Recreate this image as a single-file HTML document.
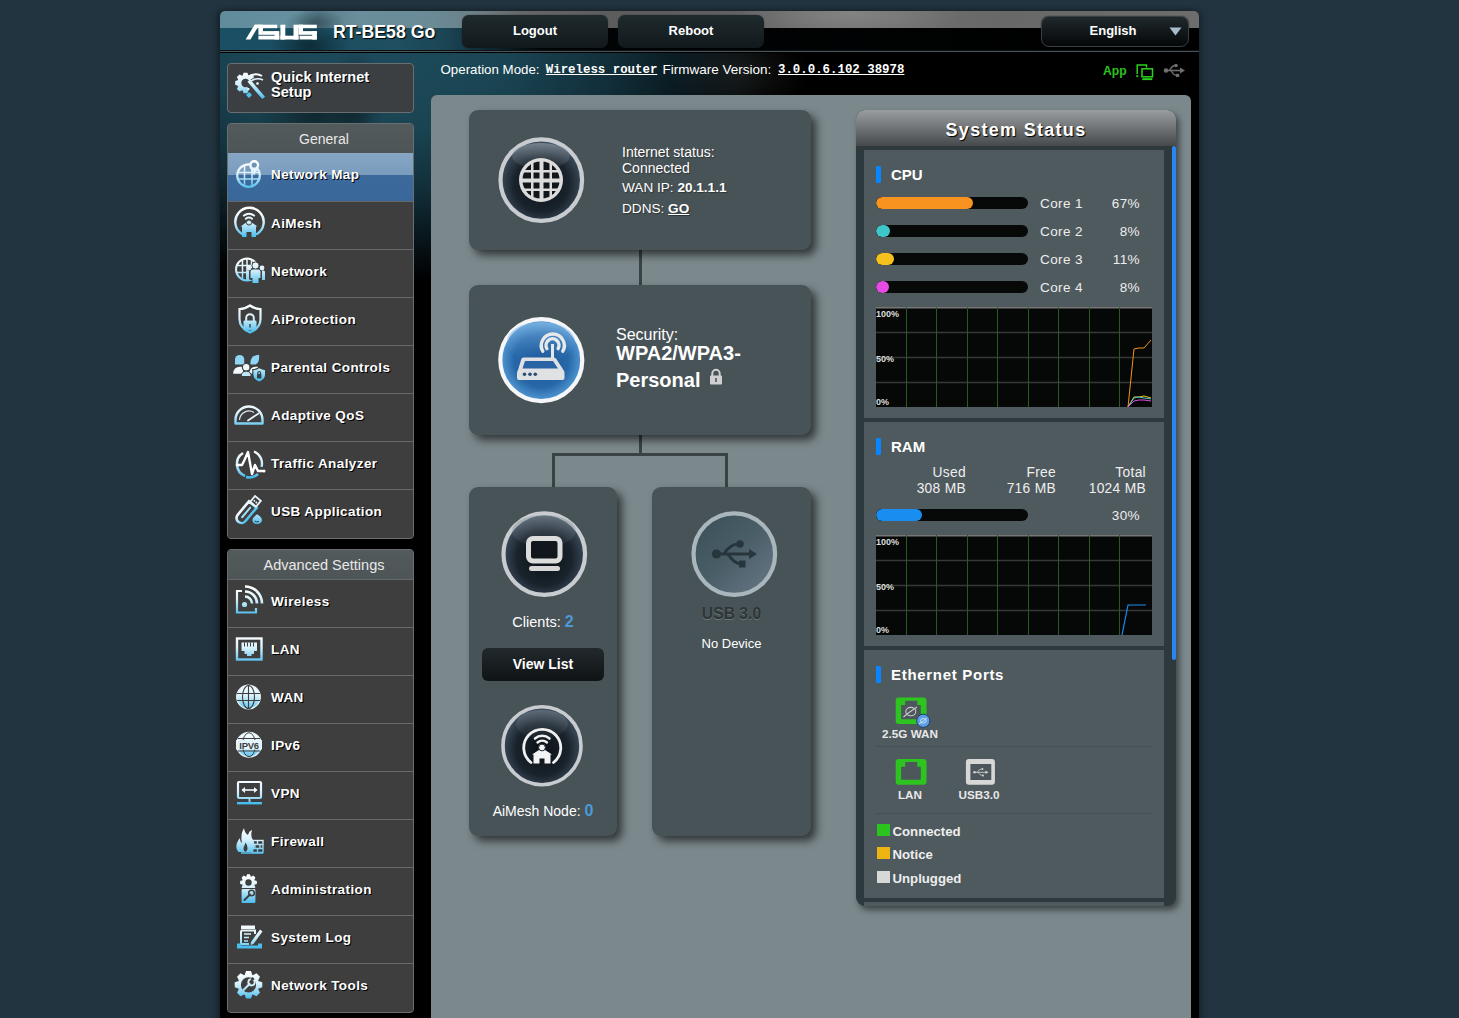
<!DOCTYPE html>
<html><head><meta charset="utf-8">
<style>
*{box-sizing:border-box}
html,body{margin:0;padding:0;width:1459px;height:1018px;overflow:hidden;background:#223440;font-family:"Liberation Sans",sans-serif;color:#fff}
.a{position:absolute}
#frame{position:absolute;left:220px;top:11px;width:979px;height:1020px;border-radius:5px 5px 0 0;overflow:hidden;background:#000;box-shadow:-3px 0 6px rgba(0,0,0,.35),3px 0 6px rgba(0,0,0,.25)}
#hdrTop{position:absolute;left:0;top:0;width:979px;height:17px;background:
 radial-gradient(ellipse 30px 14px at 95px 12px,rgba(30,50,60,.55),rgba(30,50,60,0)),
 radial-gradient(ellipse 110px 30px at 630px 2px,rgba(150,150,150,.55),rgba(150,150,150,0)),
 linear-gradient(90deg,#5f8b9b 0%,#66909f 8%,#587c8a 10%,#6a8e9b 14%,#6a8a96 22%,#6d7f86 26%,#666 31%,#5c5c5c 40%,#5e5e5e 50%,#6c6c6c 60%,#6e6e6e 70%,#686868 80%,#6d6d6d 100%)}
#hdrBot{position:absolute;left:0;top:17px;width:979px;height:22px;background:
 radial-gradient(ellipse 40px 22px at 90px 18px,rgba(5,20,28,.6),rgba(5,20,28,0)),
 linear-gradient(90deg,#1a5064 0%,#1b4e61 10%,#1f4f60 18%,#1b4555 23%,#0e2630 28%,#020405 33%,#000 100%)}
#hdrLine{position:absolute;left:0;top:39px;width:979px;height:3px;background:linear-gradient(#0a1216 0,#0a1216 1px,#4a5459 1px,#4a5459 2px,rgba(0,0,0,0) 2px)}
#below{position:absolute;left:0;top:42px;width:979px;height:1000px;background:
 radial-gradient(ellipse 60px 50px at 95px 60px,rgba(0,0,0,.45),rgba(0,0,0,0)),
 radial-gradient(ellipse 28px 60px at 135px 50px,rgba(0,0,0,.35),rgba(0,0,0,0)),
 radial-gradient(ellipse 70px 45px at 520px 20px,rgba(70,70,70,.30),rgba(0,0,0,0)),
 radial-gradient(ellipse 400px 230px at 150px 0px,#1d4b5c 0%,#1a4452 35%,#112d38 62%,rgba(0,0,0,0) 100%),
 #000}
.btn{position:absolute;height:33px;border-radius:7px;background:linear-gradient(#1f2a2e,#12191c);box-shadow:0 0 1px #000;font-weight:bold;font-size:13px;text-align:center;line-height:31px;color:#fff}
.sbox{position:absolute;left:227px;width:187px;background:#3e3e3e;border:1px solid #6a6e70;border-radius:4px;overflow:hidden}
.shead{height:29px;line-height:30px;text-align:center;padding-left:7px;font-size:14px;color:#e8e8e8;background:linear-gradient(#535a5c,#4e5557)}
.row{position:relative;height:48px;border-top:1px solid #66696b;background:#3e3e3e}
.row .t{position:absolute;left:43px;top:1px;line-height:42px;font-weight:bold;font-size:13.5px;letter-spacing:.4px;color:#fff;text-shadow:1px 1px 0 #000;white-space:nowrap}
.row svg{position:absolute;left:4px;top:8px}
.mono{font-family:"Liberation Mono",monospace;font-weight:bold;text-decoration:underline;font-size:12.4px}
.nbox{position:absolute;background:#485357;border-radius:9px;box-shadow:5px 5px 8px rgba(0,0,0,.6)}
.sec{position:absolute;left:8px;width:300px;background:#4f5a5e}
.bl{position:absolute;left:876px;width:5px;height:17px;background:#0a84ff;border-radius:1px}
.bar{position:absolute;left:876px;width:152px;height:12px;border-radius:6px;background:#070909;overflow:hidden}
.bar i{display:block;height:12px;border-radius:6px}
.ct{left:1040px;font-size:13.5px;letter-spacing:.4px;color:#eee;white-space:nowrap}
.cp{left:1090px;width:50px;text-align:right;font-size:13.5px;letter-spacing:.4px;color:#eee;white-space:nowrap}
.ram{width:76px;text-align:right;font-size:13.8px;line-height:16px;letter-spacing:.3px;color:#eee;white-space:nowrap}
.pl{text-align:center;font-size:11.7px;font-weight:bold;color:#e8e8e8;white-space:nowrap}
.lg{left:892.5px;font-size:13.2px;font-weight:bold;color:#eee;white-space:nowrap}
</style></head><body>
<div id="frame">
  <div id="hdrTop"></div><div id="hdrBot"></div><div id="hdrLine"></div>
  <div id="below"></div>
</div>

<!-- header -->
<svg class="a" style="left:242px;top:20px" width="80" height="24" viewBox="0 0 80 24"><g fill="#fff">
<path d="M3.6 19.5 L12.6 4.7 H17.4 L8.4 19.5 Z"/>
<rect x="12.6" y="4.7" width="22.6" height="3.5"/>
<rect x="16.4" y="4.7" width="4.5" height="10.1"/>
<rect x="20.9" y="11.1" width="14.3" height="3.7"/>
<rect x="32.6" y="11.1" width="4.7" height="8.4"/>
<rect x="16.4" y="15.7" width="20.9" height="3.8"/>
<rect x="38.4" y="4.7" width="4.9" height="14.8"/>
<rect x="51.5" y="4.7" width="5" height="14.8"/>
<rect x="38.4" y="15.7" width="18.1" height="3.8"/>
<rect x="56.5" y="4.7" width="18.3" height="3.5"/>
<rect x="56.5" y="4.7" width="4.5" height="10.1"/>
<rect x="61" y="11.1" width="13.8" height="3.7"/>
<rect x="70.2" y="11.1" width="4.6" height="8.4"/>
<rect x="57.5" y="15.7" width="17.3" height="3.8"/>
</g></svg>
<div class="a" style="left:333px;top:22px;font-weight:bold;font-size:17.7px;text-shadow:1px 1px 1px #000;white-space:nowrap">RT-BE58 Go</div>
<div class="btn" style="left:462px;top:15px;width:146px">Logout</div>
<div class="btn" style="left:618px;top:15px;width:146px">Reboot</div>
<div class="btn" style="left:1041px;top:16px;width:148px;height:31px;border:1px solid #394044;border-radius:8px;background:linear-gradient(#1f292d,#050708);line-height:27px;padding-right:4px">English</div>
<svg class="a" style="left:1168px;top:26px" width="15" height="11" viewBox="0 0 15 11"><path d="M1.5 1.5 H13.5 L7.5 9.5 Z" fill="#a9bccb"/></svg>
<svg class="a" style="left:1134px;top:62px" width="22" height="20" viewBox="0 0 22 20"><g fill="none" stroke="#2bd11e" stroke-width="1.5">
<path d="M3.2 12 V3 H12.5 V5.5"/><rect x="8" y="6.8" width="10.5" height="8"/></g><rect x="8.3" y="16.2" width="10" height="1.9" fill="#2bd11e"/><rect x="2.3" y="13.2" width="1.9" height="1.9" fill="#2bd11e"/></svg>
<svg class="a" style="left:1162px;top:62px" width="24" height="17" viewBox="0 0 24 17"><g fill="#6f6f6f" stroke="#6f6f6f">
<circle cx="4" cy="8.5" r="2.3" stroke="none"/><path d="M4 8.5 H19" stroke-width="1.6"/><path d="M18 5.5 L23 8.5 L18 11.5 Z" stroke="none"/>
<path d="M7.5 8.5 Q10 3.5 13.5 3.5" fill="none" stroke-width="1.4"/><circle cx="14" cy="3.5" r="1.8" stroke="none"/>
<path d="M9 8.5 Q11.5 13.5 15 13.5" fill="none" stroke-width="1.4"/><rect x="14" y="11.8" width="3.2" height="3.2" stroke="none"/></g></svg>

<div class="a" style="left:440.5px;top:62px;font-size:13.3px;color:#fff;white-space:nowrap">Operation Mode:</div>
<div class="a mono" style="left:545.8px;top:62px;color:#fff;white-space:nowrap;line-height:16px">Wireless router</div>
<div class="a" style="left:662.5px;top:62px;font-size:13.5px;color:#fff;white-space:nowrap">Firmware Version:</div>
<div class="a mono" style="left:778px;top:62px;color:#fff;white-space:nowrap;line-height:16px">3.0.0.6.102_38978</div>
<div class="a" style="left:1103px;top:64px;font-size:12.2px;font-weight:bold;color:#2ac31e">App</div>

<!-- sidebar -->
<div class="sbox" style="top:63px;height:50px;background:#3b3f42">
  <div class="a" style="left:43px;top:6px;font-weight:bold;font-size:14.6px;line-height:15px;text-shadow:1px 1px 0 #000">Quick Internet<br>Setup</div>
</div>

<div class="sbox" style="top:123px;height:416px">
  <div class="shead">General</div>
  <div class="row" style="background:linear-gradient(#86a6c4 0%,#7a9cbd 45%,#3d6a9c 46%,#3a679a 100%);border-top:none;height:48px"><div class="t">Network Map</div></div>
  <div class="row"><div class="t">AiMesh</div></div>
  <div class="row"><div class="t">Network</div></div>
  <div class="row"><div class="t">AiProtection</div></div>
  <div class="row"><div class="t">Parental Controls</div></div>
  <div class="row"><div class="t">Adaptive QoS</div></div>
  <div class="row"><div class="t">Traffic Analyzer</div></div>
  <div class="row"><div class="t">USB Application</div></div>
</div>

<div class="sbox" style="top:549px;height:464px">
  <div class="shead" style="font-size:14.5px">Advanced Settings</div>
  <div class="row"><div class="t">Wireless</div></div>
  <div class="row"><div class="t">LAN</div></div>
  <div class="row"><div class="t">WAN</div></div>
  <div class="row"><div class="t">IPv6</div></div>
  <div class="row"><div class="t">VPN</div></div>
  <div class="row"><div class="t">Firewall</div></div>
  <div class="row"><div class="t">Administration</div></div>
  <div class="row"><div class="t">System Log</div></div>
  <div class="row"><div class="t">Network Tools</div></div>
</div>

<!-- sidebar icons -->
<!--ICONS-->
<svg width="0" height="0" style="position:absolute"><defs>
<linearGradient id="ig" gradientUnits="userSpaceOnUse" x1="0" y1="8" x2="0" y2="37"><stop offset="0" stop-color="#ffffff"/><stop offset=".45" stop-color="#d6f0fb"/><stop offset="1" stop-color="#3fb8ec"/></linearGradient>
<linearGradient id="ig2" gradientUnits="userSpaceOnUse" x1="0" y1="-6" x2="0" y2="6"><stop offset="0" stop-color="#ffffff"/><stop offset="1" stop-color="#45bdee"/></linearGradient>
</defs></svg>
<svg class="a" style="left:228px;top:63px" width="44" height="50" viewBox="0 0 44 50">
<path d="M24.95 17.08 L27.84 18.15 L27.84 21.85 L24.95 22.92 L24.83 23.21 L26.11 26.00 L23.50 28.61 L20.71 27.33 L20.42 27.45 L19.35 30.34 L15.65 30.34 L14.58 27.45 L14.29 27.33 L11.50 28.61 L8.89 26.00 L10.17 23.21 L10.05 22.92 L7.16 21.85 L7.16 18.15 L10.05 17.08 L10.17 16.79 L8.89 14.00 L11.50 11.39 L14.29 12.67 L14.58 12.55 L15.65 9.66 L19.35 9.66 L20.42 12.55 L20.71 12.67 L23.50 11.39 L26.11 14.00 L24.83 16.79 Z" fill="url(#ig)"/>
<circle cx="17.5" cy="20" r="4.2" fill="#3b3f42"/>
<path d="M17.5 20 L30 12 L36 22 L24 34 Z" fill="#3b3f42"/>
<path d="M19 14 Q28 9 34 13" fill="none" stroke="url(#ig)" stroke-width="2"/>
<path d="M22 19 L34.5 33.5" stroke="url(#ig)" stroke-width="3.6" stroke-linecap="square"/>
<path d="M23 18 Q29 14 35 17" fill="none" stroke="url(#ig)" stroke-width="1.5"/>
<circle cx="29.5" cy="20.5" r="1.3" fill="#fff"/><circle cx="20.5" cy="26" r="1.1" fill="#fff"/>
<path d="M21 29 L24 32 L21 35 L18 32 Z" fill="#4cc0ee"/>
</svg>
<svg class="a" style="left:228px;top:153px" width="44" height="48" viewBox="0 0 44 48">
<circle cx="20.5" cy="22.6" r="11.3" fill="none" stroke="url(#ig)" stroke-width="2.2"/>
<g stroke="url(#ig)" stroke-width="1.6" fill="none"><path d="M9.5 19.5H31M9.5 26H31M16.5 12V33.5M24 12V33.5"/></g>
<path d="M26.2 7 a5 5 0 0 1 5 5 c0 3 -3 6 -5 10.5 c-2 -4.5 -5 -7.5 -5 -10.5 a5 5 0 0 1 5 -5z" fill="url(#ig)"/>
<circle cx="26.2" cy="12" r="2.6" fill="#6f92b6"/>
</svg>
<svg class="a" style="left:228px;top:201px" width="44" height="48" viewBox="0 0 44 48">
<path d="M14 33 A14.2 14.2 0 1 1 29 33" fill="none" stroke="url(#ig)" stroke-width="2.4" stroke-linecap="round"/>
<path d="M16 14.5 A8 8 0 0 1 26 14.5" fill="none" stroke="url(#ig)" stroke-width="2.2" stroke-linecap="round"/>
<path d="M17.8 17.8 A5 5 0 0 1 24 17.8" fill="none" stroke="url(#ig)" stroke-width="2" stroke-linecap="round"/>
<path d="M21 19.5 L29.5 25.5 L28 25.5 V36 H23.5 V31 H18.5 V36 H14 V25.5 L12.5 25.5 Z" fill="url(#ig)"/>
<circle cx="21" cy="21.5" r="2.6" fill="url(#ig)" stroke="#3e3e3e" stroke-width="1"/>
</svg>
<svg class="a" style="left:228px;top:249px" width="44" height="48" viewBox="0 0 44 48">
<circle cx="19" cy="20.5" r="11" fill="none" stroke="url(#ig)" stroke-width="2"/>
<g stroke="url(#ig)" stroke-width="1.5" fill="none"><path d="M8.5 16.5H29.5M8.5 23.5H29.5M14.5 10V31M19 9.5V31.5M23.5 10V31"/></g>
<path d="M21 22 Q21 19 24 19 H31 Q34 19 34 22 V29 Q33 31 31 31 V34 H24 V31 Q21 31 21 29Z" fill="#3e3e3e"/>
<circle cx="27.5" cy="16.5" r="3.6" fill="url(#ig)" stroke="#3e3e3e" stroke-width="1"/>
<path d="M22.5 23 Q22.5 20.5 25 20.5 H30 Q32.5 20.5 32.5 23 V29 H30.5 V34 H24.5 V29 H22.5Z" fill="url(#ig)"/>
<circle cx="21" cy="19" r="2.4" fill="url(#ig)"/><path d="M18 23 Q18 21.5 19.5 21.5 H21 V31 H18Z" fill="url(#ig)"/>
<circle cx="34" cy="19" r="2.4" fill="url(#ig)"/><path d="M34 21.5 H35.5 Q37 21.5 37 23 V31 H34Z" fill="url(#ig)"/>
</svg>
<svg class="a" style="left:228px;top:297px" width="44" height="48" viewBox="0 0 44 48">
<path d="M22 8.5 Q17 12 11.5 12 V22 Q11.5 31 22 35.5 Q32.5 31 32.5 22 V12 Q27 12 22 8.5Z" fill="none" stroke="url(#ig)" stroke-width="2.2"/>
<path d="M18.2 24 V21 A3.8 3.8 0 0 1 25.8 21 V24" fill="none" stroke="url(#ig)" stroke-width="2"/>
<rect x="15.5" y="23.5" width="13" height="10" rx="1" fill="url(#ig)"/>
<rect x="21.3" y="27" width="1.4" height="3.5" fill="#3e3e3e"/>
</svg>
<svg class="a" style="left:228px;top:345px" width="44" height="48" viewBox="0 0 44 48">
<path d="M7 19.5 V14.5 A4.6 4.6 0 0 1 16.2 14.5 V19.5 Z" fill="#8fd6f6"/>
<path d="M22.5 19.5 Q21.5 10.5 31 9.8 Q31.8 18 27.5 19.5 Z" fill="#8fd6f6"/>
<path d="M5.2 28.7 Q5.5 21.8 12 21.8 H15 V28.7 Z" fill="#f2f9fd"/>
<path d="M21.5 28.5 Q21.5 21.8 27.5 21.8 H30 V28.5 Z" fill="#f2f9fd"/>
<circle cx="18.2" cy="22.3" r="3.8" fill="#eef8fd" stroke="#3e3e3e" stroke-width="1.2"/>
<path d="M13.2 31.5 Q13.2 26.2 18.2 26.2 Q23.2 26.2 23.2 31.5Z" fill="#bfe6f8" stroke="#3e3e3e" stroke-width="1"/>
<path d="M31.2 22.6 Q34.2 24.6 37.6 24.6 V30 Q37.6 34.5 31.2 37.2 Q24.8 34.5 24.8 30 V24.6 Q28.2 24.6 31.2 22.6Z" fill="url(#ig)" stroke="#3e3e3e" stroke-width="1.2"/>
<rect x="29" y="29" width="4.4" height="4.4" rx=".5" fill="#34424a"/><path d="M29.9 29 V27.8 A1.3 1.3 0 0 1 32.5 27.8 V29" fill="none" stroke="#34424a" stroke-width="1.2"/>
</svg>
<svg class="a" style="left:228px;top:393px" width="44" height="48" viewBox="0 0 44 48">
<path d="M7.5 30.5 V27 A13.5 13.5 0 0 1 34.5 27 V30.5 Z" fill="none" stroke="url(#ig)" stroke-width="2.4" stroke-linejoin="round"/>
<path d="M11.5 27 A9.5 9.5 0 0 1 26 19.5" fill="none" stroke="#d8eef8" stroke-width="1.2"/>
<path d="M20 27.5 L30.5 20.5" stroke="#e8f4fa" stroke-width="1.8" stroke-linecap="round"/>
</svg>
<svg class="a" style="left:228px;top:441px" width="44" height="48" viewBox="0 0 44 48">
<path d="M15 12 A13 13 0 0 0 17 35" fill="none" stroke="url(#ig)" stroke-width="2.6"/>
<path d="M26 10.5 A13 13 0 0 1 33.5 26" fill="none" stroke="url(#ig)" stroke-width="2.4"/>
<path d="M18 36 A13 13 0 0 0 30 33" fill="none" stroke="url(#ig)" stroke-width="2.4"/>
<path d="M9 24 H14 L16.5 19 L20 11 L24 33 L27 24 L30 30 H34.5" fill="none" stroke="#ffffff" stroke-width="2.4" stroke-linejoin="round" stroke-linecap="round"/>
<circle cx="36" cy="30" r="1.5" fill="#fff"/>
</svg>
<svg class="a" style="left:228px;top:489px" width="44" height="48" viewBox="0 0 44 48">
<g transform="translate(19 22.5) rotate(-50)">
<path d="M-8.5 -5 H9 V5 H-8.5 A5 5 0 0 1 -8.5 -5Z" fill="none" stroke="url(#ig2)" stroke-width="2.6"/>
<path d="M-7.5 0 H5" stroke="url(#ig2)" stroke-width="2" stroke-linecap="round"/>
<rect x="9.5" y="-3.8" width="7.5" height="7.6" fill="none" stroke="#eaf6fc" stroke-width="1.8"/>
<rect x="12" y="-2" width="1.8" height="1.6" fill="#eaf6fc"/><rect x="12" y=".6" width="1.8" height="1.6" fill="#eaf6fc"/>
</g>
<path d="M29 24.5 Q35 28 34.5 31.5 Q34 35.5 29 35.5 Q24 35.5 23.8 31 Q24 28 29 24.5Z" fill="url(#ig)" stroke="#3e3e3e" stroke-width="1.2"/>
<path d="M26.5 32 Q28 33.5 31 32.5" fill="none" stroke="#3e3e3e" stroke-width="1"/>
</svg>
<svg class="a" style="left:228px;top:579px" width="44" height="48" viewBox="0 0 44 48">
<path d="M14 12 H9 V33.5 H28 V29" fill="none" stroke="url(#ig)" stroke-width="2.2"/>
<path d="M17 12.5 A12 12 0 0 1 29 24.5" fill="none" stroke="url(#ig)" stroke-width="2.6"/>
<path d="M17 7.5 A17 17 0 0 1 34 24.5" fill="none" stroke="url(#ig)" stroke-width="2.6"/>
<path d="M17 17.5 A7 7 0 0 1 24 24.5" fill="none" stroke="url(#ig)" stroke-width="2.6"/>
<circle cx="16.5" cy="25.5" r="2.6" fill="url(#ig)"/>
</svg>
<svg class="a" style="left:228px;top:627px" width="44" height="48" viewBox="0 0 44 48">
<rect x="9" y="11.5" width="24.5" height="21" fill="none" stroke="url(#ig)" stroke-width="2.4"/>
<path d="M13.5 15.5 H29 V24 H26 V27 H23.5 V29 H19 V27 H16.5 V24 H13.5Z" fill="url(#ig)"/>
<g stroke="#3e3e3e" stroke-width="1"><path d="M16.5 15.5V19.5M19.5 15.5V19.5M22.5 15.5V19.5M25.5 15.5V19.5"/></g>
</svg>
<svg class="a" style="left:228px;top:675px" width="44" height="48" viewBox="0 0 44 48">
<circle cx="20.5" cy="22" r="11.8" fill="url(#ig)" stroke="#e8f6fc" stroke-width="1.2"/>
<g stroke="#3e3e3e" stroke-width="1.1" fill="none">
<path d="M9 18.5H32M9 25.5H32M20.5 10V34"/>
<ellipse cx="20.5" cy="22" rx="6" ry="11.5"/>
</g>
</svg>
<svg class="a" style="left:228px;top:723px" width="44" height="48" viewBox="0 0 44 48">
<circle cx="21" cy="21.7" r="12.4" fill="url(#ig)" stroke="#e8f6fc" stroke-width="1.2"/>
<g stroke="#3e3e3e" stroke-width="1" fill="none">
<path d="M10 15.5H32M10 28H32"/>
<ellipse cx="21" cy="21.7" rx="6.5" ry="12"/>
</g>
<rect x="8" y="17" width="26" height="9.5" fill="#e4f4fb"/>
<text x="21" y="25.5" text-anchor="middle" font-family="Liberation Sans" font-weight="bold" font-size="9.5" fill="#3e3e3e" letter-spacing="-.3">IPV6</text>
</svg>
<svg class="a" style="left:228px;top:771px" width="44" height="48" viewBox="0 0 44 48">
<rect x="10" y="11" width="23" height="16" rx="1" fill="none" stroke="url(#ig)" stroke-width="2.2"/>
<path d="M14.5 19 H28.5" stroke="#f4fbff" stroke-width="1.6"/>
<path d="M13.5 19 L17 16 V22Z M29.5 19 L26 16 V22Z" fill="#f4fbff"/>
<rect x="20.5" y="27" width="2" height="4" fill="url(#ig)"/>
<rect x="9" y="31" width="25" height="2.4" fill="#48bdee"/>
</svg>
<svg class="a" style="left:228px;top:819px" width="44" height="48" viewBox="0 0 44 48">
<path d="M16 9 Q16.5 14 20 16 Q21 12 24 11 Q22 17 25.5 22 Q28 26 24.5 33 H10.5 Q7 29 9 24 Q10 21 12 19 Q12 23 14 24 Q12 16 16 9Z" fill="url(#ig)"/>
<path d="M17.5 33 Q14.5 31 16 27.5 Q17 25.5 17.5 23.5 Q19.5 26 19.5 29 Q20 31.5 17.5 33Z" fill="#3e3e3e"/>
<g fill="none" stroke="url(#ig)" stroke-width="1.4">
<rect x="24.5" y="21.5" width="10.5" height="12"/>
<path d="M24.5 25.5H35M24.5 29.5H35M29.5 21.5V25.5M27 25.5V29.5M32 25.5V29.5M29.5 29.5V33.5M13 34H35"/>
</g>
</svg>
<svg class="a" style="left:228px;top:867px" width="44" height="48" viewBox="0 0 44 48">
<path d="M26.37 13.20 L28.87 14.01 L28.87 16.99 L26.37 17.80 L26.27 18.02 L27.47 20.36 L25.36 22.47 L23.02 21.27 L22.80 21.37 L21.99 23.87 L19.01 23.87 L18.20 21.37 L17.98 21.27 L15.64 22.47 L13.53 20.36 L14.73 18.02 L14.63 17.80 L12.13 16.99 L12.13 14.01 L14.63 13.20 L14.73 12.98 L13.53 10.64 L15.64 8.53 L17.98 9.73 L18.20 9.63 L19.01 7.13 L21.99 7.13 L22.80 9.63 L23.02 9.73 L25.36 8.53 L27.47 10.64 L26.27 12.98 Z" fill="url(#ig)"/>
<circle cx="20.5" cy="15.5" r="3.2" fill="#3e3e3e"/>
<rect x="13" y="21.5" width="15" height="15" rx="1.5" fill="url(#ig)" stroke="#3e3e3e" stroke-width="1.2"/>
<path d="M16.5 33 L22 27.5" stroke="#3e3e3e" stroke-width="2" stroke-linecap="round"/>
<circle cx="23.5" cy="26" r="2.8" fill="none" stroke="#3e3e3e" stroke-width="1.5"/>
</svg>
<svg class="a" style="left:228px;top:915px" width="44" height="48" viewBox="0 0 44 48">
<path d="M13 10.5 H27 V14 H13Z" fill="url(#ig)"/>
<path d="M13 15.5 H27 V19 M13 15.5 V29 H21" fill="none" stroke="url(#ig)" stroke-width="2"/>
<g stroke="url(#ig)" stroke-width="1.5"><path d="M16 19H23M16 22.5H21M16 26H20"/></g>
<path d="M23 27 L32 14.5 L34.5 16.5 L25.5 29 L22.5 30Z" fill="url(#ig)"/>
<path d="M9 28.5 V33.5 H34 V28.5 H30 V30.5 H13 V28.5Z" fill="#48bdee"/>
</svg>
<svg class="a" style="left:228px;top:963px" width="44" height="48" viewBox="0 0 44 48">
<path d="M30.28 17.97 L34.28 19.34 L34.28 24.26 L30.28 25.63 L30.12 26.01 L31.99 29.81 L28.51 33.29 L24.71 31.42 L24.33 31.58 L22.96 35.58 L18.04 35.58 L16.67 31.58 L16.29 31.42 L12.49 33.29 L9.01 29.81 L10.88 26.01 L10.72 25.63 L6.72 24.26 L6.72 19.34 L10.72 17.97 L10.88 17.59 L9.01 13.79 L12.49 10.31 L16.29 12.18 L16.67 12.02 L18.04 8.02 L22.96 8.02 L24.33 12.02 L24.71 12.18 L28.51 10.31 L31.99 13.79 L30.12 17.59 Z" fill="url(#ig)"/>
<circle cx="20.5" cy="21.8" r="7.6" fill="#3e3e3e"/>
<path d="M15.5 27 L21.5 21" stroke="url(#ig)" stroke-width="2.2" stroke-linecap="round"/>
<circle cx="23.5" cy="19.3" r="3.2" fill="none" stroke="url(#ig)" stroke-width="1.8"/>
<rect x="23" y="14.5" width="3" height="3" fill="#3e3e3e" transform="rotate(45 24.5 16)"/>
</svg>
<!--/ICONS-->
<!-- content panel -->
<div class="a" style="left:431px;top:95px;width:760px;height:930px;background:#7b888c;border-radius:6px 6px 0 0"></div>

<!-- connector lines -->
<div class="a" style="left:639px;top:249px;width:3px;height:37px;background:#3b4245"></div>
<div class="a" style="left:639px;top:434px;width:3px;height:21px;background:#3b4245"></div>
<div class="a" style="left:552px;top:453px;width:176px;height:3px;background:#3b4245"></div>
<div class="a" style="left:552px;top:453px;width:3px;height:35px;background:#3b4245"></div>
<div class="a" style="left:725px;top:453px;width:3px;height:35px;background:#3b4245"></div>

<!-- boxes -->
<div class="nbox" style="left:469px;top:110px;width:342px;height:140px"></div>
<div class="nbox" style="left:469px;top:285px;width:342px;height:150px"></div>
<div class="nbox" style="left:469px;top:487px;width:148px;height:349px"></div>
<div class="nbox" style="left:652px;top:487px;width:159px;height:349px"></div>

<!-- big circle icons -->
<svg class="a" style="left:493px;top:132px" width="96" height="96" viewBox="0 0 96 96">
 <defs>
  <radialGradient id="dkg" cx="50%" cy="55%" r="52%"><stop offset="0" stop-color="#0c1116"/><stop offset=".65" stop-color="#19232c"/><stop offset="1" stop-color="#3e4d5c"/></radialGradient>
  <linearGradient id="hlg" x1="0" y1="0" x2="0" y2="1"><stop offset="0" stop-color="#8a96a0" stop-opacity=".75"/><stop offset="1" stop-color="#5a6670" stop-opacity=".15"/></linearGradient>
  <clipPath id="gcl"><circle cx="48" cy="48" r="18.6"/></clipPath>
 </defs>
 <circle cx="48.3" cy="48.1" r="40.8" fill="url(#dkg)" stroke="#c8ccd0" stroke-width="4.2"/>
 <ellipse cx="48" cy="24" rx="29" ry="13" fill="url(#hlg)"/>
 <circle cx="48" cy="48" r="22" fill="#dcdcdc"/>
 <g clip-path="url(#gcl)" fill="#11161b">
  <rect x="28" y="28" width="10" height="10"/><rect x="40.5" y="28" width="6" height="10"/><rect x="50.5" y="28" width="6" height="10"/><rect x="59" y="28" width="10" height="10"/>
  <rect x="28" y="40.5" width="10" height="6"/><rect x="40.5" y="40.5" width="6" height="6"/><rect x="50.5" y="40.5" width="6" height="6"/><rect x="59" y="40.5" width="10" height="6"/>
  <rect x="28" y="50.5" width="10" height="6"/><rect x="40.5" y="50.5" width="6" height="6"/><rect x="50.5" y="50.5" width="6" height="6"/><rect x="59" y="50.5" width="10" height="6"/>
  <rect x="28" y="59" width="10" height="10"/><rect x="40.5" y="59" width="6" height="10"/><rect x="50.5" y="59" width="6" height="10"/><rect x="59" y="59" width="10" height="10"/>
 </g>
</svg>

<svg class="a" style="left:493px;top:312px" width="96" height="96" viewBox="0 0 96 96">
 <defs>
  <radialGradient id="blg" cx="50%" cy="50%" r="55%"><stop offset="0" stop-color="#1d5797"/><stop offset=".6" stop-color="#2767a8"/><stop offset="1" stop-color="#5fa8e0"/></radialGradient>
  <linearGradient id="blh" x1="0" y1="0" x2="0" y2="1"><stop offset="0" stop-color="#8cc0ea" stop-opacity=".7"/><stop offset="1" stop-color="#3a7ac0" stop-opacity="0"/></linearGradient>
 </defs>
 <circle cx="48.3" cy="48.1" r="41" fill="url(#blg)" stroke="#f4f6f8" stroke-width="4.2"/>
 <ellipse cx="48" cy="30" rx="34" ry="20" fill="url(#blh)"/>
 <g fill="none" stroke="#e6e8ea" stroke-width="3.4" stroke-linecap="round">
  <path d="M53.9 36.6 A6.5 6.5 0 1 1 65.1 36.6"/>
  <path d="M49.8 39.2 A11.5 11.5 0 1 1 69.8 39.2"/>
 </g>
 <rect x="58" y="32" width="3" height="15" fill="#e6e8ea"/>
 <path d="M31 45.5 H60.5 Q62 45.5 63 46.5 L70.5 58 Q71.5 59.5 71.5 61 V66 Q71.5 68 69.5 68 H26 Q24 68 24 66 V61 Q24 59.5 25 58 L28.5 46.5 Q29.5 45.5 31 45.5 Z" fill="#dfe1e3"/>
 <path d="M32 49 H60 L65 56.5 H29.5 Z" fill="#2a64a4"/>
 <circle cx="31.5" cy="62.3" r="1.8" fill="#2b4e78"/><circle cx="37" cy="62.3" r="1.8" fill="#2b4e78"/><circle cx="42.3" cy="62.3" r="1.8" fill="#2b4e78"/>
</svg>

<svg class="a" style="left:496px;top:506px" width="96" height="96" viewBox="0 0 96 96">
 <circle cx="48.3" cy="48.1" r="40.8" fill="url(#dkg)" stroke="#c8ccd0" stroke-width="4.2"/>
 <ellipse cx="48" cy="25" rx="32" ry="16" fill="url(#hlg)" opacity=".7"/>
 <rect x="32.5" y="32.5" width="31.5" height="22.5" rx="4.5" fill="#11171c" stroke="#dcdcdc" stroke-width="5"/>
 <rect x="33" y="60" width="31" height="5" rx="2.5" fill="#d6d6d6"/>
</svg>

<svg class="a" style="left:686px;top:506px" width="96" height="96" viewBox="0 0 96 96">
 <defs>
  <linearGradient id="usg" x1="0" y1="0" x2="1" y2="1"><stop offset="0" stop-color="#3a4e58"/><stop offset=".5" stop-color="#4a5e68"/><stop offset="1" stop-color="#6a7a86"/></linearGradient>
 </defs>
 <circle cx="48.3" cy="48.1" r="40.8" fill="url(#usg)" stroke="#a9b6bc" stroke-width="4.2"/>
 <g fill="#27363d" stroke="#27363d">
  <circle cx="30.5" cy="48" r="4.6" stroke="none"/>
  <path d="M31 48 H64" stroke-width="3.2" fill="none"/>
  <path d="M63 43 L71 48 L63 53 Z" stroke="none"/>
  <path d="M38 48 Q44 38 53 38" fill="none" stroke-width="3"/>
  <circle cx="54" cy="38" r="3.8" stroke="none"/>
  <path d="M42 48 Q48 58 56 58" fill="none" stroke-width="3"/>
  <rect x="53" y="54.5" width="6.5" height="7" stroke="none"/>
 </g>
</svg>

<svg class="a" style="left:494px;top:698px" width="96" height="96" viewBox="0 0 96 96">
 <circle cx="48" cy="47.7" r="39" fill="url(#dkg)" stroke="#c8ccd0" stroke-width="3.6"/>
 <ellipse cx="48" cy="26" rx="26" ry="14" fill="url(#hlg)" opacity=".6"/>
 <path d="M37 64.5 A18.5 18.5 0 1 1 59.5 64.5" fill="none" stroke="#f0f0f0" stroke-width="2.8" stroke-linecap="round"/>
 <path d="M41 40.5 A11 11 0 0 1 55.5 40.5" fill="none" stroke="#f0f0f0" stroke-width="2.6" stroke-linecap="round"/>
 <path d="M43.5 44.5 A7 7 0 0 1 53 44.5" fill="none" stroke="#f0f0f0" stroke-width="2.4" stroke-linecap="round"/>
 <path d="M48 50 L58 56.5 L56.5 56.5 V65.5 H50.5 V60.5 H45.5 V65.5 H39.5 V56.5 L38 56.5 Z" fill="#f4f4f4"/>
 <circle cx="48" cy="49.5" r="3.4" fill="#f4f4f4" stroke="#1a232b" stroke-width="1"/>
</svg>

<div class="a" style="left:622px;top:144px;font-size:14px;line-height:16px;white-space:nowrap;text-shadow:1px 1px 1px rgba(0,0,0,.35)">Internet status:<br>Connected</div>
<div class="a" style="left:622px;top:180px;font-size:13.6px;white-space:nowrap;text-shadow:1px 1px 1px rgba(0,0,0,.35)">WAN IP: <b>20.1.1.1</b></div>
<div class="a" style="left:622px;top:201px;font-size:13.6px;white-space:nowrap;text-shadow:1px 1px 1px rgba(0,0,0,.35)">DDNS: <b style="text-decoration:underline">GO</b></div>

<div class="a" style="left:616px;top:326px;font-size:16px;white-space:nowrap">Security:</div>
<div class="a" style="left:616px;top:340px;font-size:20px;font-weight:bold;line-height:27px;white-space:nowrap">WPA2/WPA3-<br>Personal</div>

<div class="a" style="left:469px;top:613px;width:148px;text-align:center;font-size:14.5px;white-space:nowrap">Clients: <b style="color:#4a9bd8;font-size:16px">2</b></div>
<div class="a" style="left:482px;top:648px;width:122px;height:33px;border-radius:6px;background:linear-gradient(#22292c,#0f1315);font-weight:bold;font-size:14px;line-height:32px;text-align:center">View List</div>
<div class="a" style="left:469px;top:802px;width:148px;text-align:center;font-size:14px;white-space:nowrap">AiMesh Node: <b style="color:#4a9bd8;font-size:16px">0</b></div>

<div class="a" style="left:652px;top:605px;width:159px;text-align:center;font-size:15.7px;font-weight:bold;color:#2e3538;text-shadow:0 1px 0 #6a7478;white-space:nowrap">USB 3.0</div>
<div class="a" style="left:652px;top:636px;width:159px;text-align:center;font-size:13px;white-space:nowrap">No Device</div>


<!-- system status -->
<div class="a" style="left:856px;top:110px;width:320px;height:796px;border-radius:9px;background:#2e393d;box-shadow:3px 4px 6px rgba(0,0,0,.5);overflow:hidden">
  <div class="a" style="left:0;top:0;width:320px;height:36px;background:linear-gradient(#9a9d9f,#75787a 45%,#45494c 100%)"></div>
  <div class="a" style="left:0;top:10px;width:320px;text-align:center;font-weight:bold;font-size:18px;letter-spacing:1.3px;text-shadow:1px 1px 1px #000;white-space:nowrap">System Status</div>
  <div class="sec" style="top:40px;height:268px"></div>
  <div class="sec" style="top:312px;height:224px"></div>
  <div class="sec" style="top:540px;height:248px"></div>
  <div class="sec" style="top:792px;height:20px"></div>
  <div class="a" style="left:316px;top:36px;width:4px;height:514px;background:#2a86f5;border-radius:2px"></div>
</div>
<!-- CPU -->
<div class="bl" style="top:166px"></div>
<div class="a" style="left:891px;top:166px;font-weight:bold;font-size:15px">CPU</div>
<div class="bar" style="top:197px"><i style="width:97px;background:#f7931e"></i></div>
<div class="bar" style="top:225px"><i style="width:14px;background:#3ec6c9"></i></div>
<div class="bar" style="top:253px"><i style="width:18px;background:#f5c21d"></i></div>
<div class="bar" style="top:281px"><i style="width:13px;background:#e64ce3"></i></div>
<div class="a ct" style="top:196px">Core 1</div><div class="a cp" style="top:196px">67%</div>
<div class="a ct" style="top:224px">Core 2</div><div class="a cp" style="top:224px">8%</div>
<div class="a ct" style="top:252px">Core 3</div><div class="a cp" style="top:252px">11%</div>
<div class="a ct" style="top:280px">Core 4</div><div class="a cp" style="top:280px">8%</div>
<svg class="a" style="left:876px;top:307px" width="276" height="100" viewBox="0 0 276 100">
 <rect x="0" y="0" width="276" height="100" fill="#060808"/>
 <rect x="0" y="0" width="276" height="1.5" fill="#777"/>
 <g stroke="#343836" stroke-width="1.3"><path d="M0 25.5H276M0 50.5H276M0 75.5H276"/></g>
 <g stroke="#2a5a22" stroke-width="1"><path d="M30.5 0V100M60.5 0V100M91.5 0V100M121.5 0V100M152.5 0V100M182.5 0V100M213.5 0V100M243.5 0V100"/></g>
 <text x="0" y="10" font-size="9" font-weight="bold" fill="#ddd" font-family="Liberation Sans">100%</text>
 <text x="0" y="55" font-size="9" font-weight="bold" fill="#ddd" font-family="Liberation Sans">50%</text>
 <text x="0" y="98" font-size="9" font-weight="bold" fill="#ddd" font-family="Liberation Sans">0%</text>
 <polyline points="252,100 258,42 263,41 268,41 275,33" fill="none" stroke="#f7931e" stroke-width="1"/>
 <polyline points="252,100 258,90 263,90 268,89 275,91" fill="none" stroke="#f5c21d" stroke-width="1"/>
 <polyline points="252,100 258,91 263,90 268,91 275,92" fill="none" stroke="#3ec6c9" stroke-width="1"/>
 <polyline points="252,100 258,94 263,93 268,93 275,94" fill="none" stroke="#e64ce3" stroke-width="1"/>
</svg>
<!-- RAM -->
<div class="bl" style="top:438px"></div>
<div class="a" style="left:891px;top:438px;font-weight:bold;font-size:15px">RAM</div>
<div class="a ram" style="left:890px;top:465px">Used<br>308 MB</div>
<div class="a ram" style="left:980px;top:465px">Free<br>716 MB</div>
<div class="a ram" style="left:1070px;top:465px">Total<br>1024 MB</div>
<div class="bar" style="top:509px"><i style="width:46px;background:#1a8ef0"></i></div>
<div class="a cp" style="top:508px">30%</div>
<svg class="a" style="left:876px;top:535px" width="276" height="100" viewBox="0 0 276 100">
 <rect x="0" y="0" width="276" height="100" fill="#060808"/>
 <rect x="0" y="0" width="276" height="1.5" fill="#777"/>
 <g stroke="#343836" stroke-width="1.3"><path d="M0 25.5H276M0 50.5H276M0 75.5H276"/></g>
 <g stroke="#2a5a22" stroke-width="1"><path d="M30.5 0V100M60.5 0V100M91.5 0V100M121.5 0V100M152.5 0V100M182.5 0V100M213.5 0V100M243.5 0V100"/></g>
 <text x="0" y="10" font-size="9" font-weight="bold" fill="#ddd" font-family="Liberation Sans">100%</text>
 <text x="0" y="55" font-size="9" font-weight="bold" fill="#ddd" font-family="Liberation Sans">50%</text>
 <text x="0" y="98" font-size="9" font-weight="bold" fill="#ddd" font-family="Liberation Sans">0%</text>
 <polyline points="246,100 252,70 270,70" fill="none" stroke="#1a8ef0" stroke-width="1.2"/>
</svg>
<!-- Ethernet -->
<div class="bl" style="top:666px"></div>
<div class="a" style="left:891px;top:666px;font-weight:bold;font-size:15px;letter-spacing:.7px">Ethernet Ports</div>
<div class="a" style="left:876px;top:746px;width:276px;height:1px;background:#475054"></div>
<div class="a" style="left:876px;top:813px;width:276px;height:1px;background:#475054"></div>

<!-- port icons -->
<svg class="a" style="left:886px;top:690px" width="120" height="100" viewBox="0 0 120 100">
 <rect x="9.7" y="7.6" width="30.8" height="26.4" rx="3" fill="#2ec41f"/>
 <path d="M15.1 15.1 H19.2 V10.8 H31.3 V15.1 H34.8 V29.2 H15.1 Z" fill="#4c565b"/>
 <g fill="none" stroke="#c9cccd" stroke-width="1.1"><ellipse cx="24.8" cy="21.6" rx="5" ry="4.2"/><path d="M17.5 27 Q22 23 31 17" /></g>
 <circle cx="37.3" cy="30.8" r="6.6" fill="#5c9fe6" stroke="#1c3f60" stroke-width="1"/>
 <g fill="none" stroke="#d8e8f8" stroke-width=".9"><ellipse cx="37.3" cy="30.8" rx="2.8" ry="2.3"/><path d="M33 34 Q36 32 41 28"/></g>
 <rect x="9.7" y="68.9" width="30.8" height="25.9" rx="3" fill="#2ec41f"/>
 <path d="M15.1 76.7 H19.2 V72.1 H31.3 V76.7 H34.8 V89.8 H15.1 Z" fill="#4c565b"/>
 <rect x="79.9" y="69.1" width="29" height="25.7" rx="3" fill="#d7d7d7"/>
 <rect x="84.4" y="74" width="20.9" height="16" fill="#4c565b"/>
 <g fill="#cfd2d3" stroke="#cfd2d3"><circle cx="88.5" cy="82.3" r="1.3" stroke="none"/><path d="M88.5 82.3 H100" stroke-width=".9"/><path d="M99.5 80.6 L102.5 82.3 L99.5 84 Z" stroke="none"/>
 <path d="M91 82.3 Q93 79 96 79" fill="none" stroke-width=".8"/><circle cx="96.5" cy="79" r=".9" stroke="none"/>
 <path d="M92 82.3 Q94 85.5 96.5 85.5" fill="none" stroke-width=".8"/><rect x="96" y="84.6" width="1.8" height="1.8" stroke="none"/></g>
</svg>
<svg class="a" style="left:708px;top:368px" width="16" height="18" viewBox="0 0 16 18">
 <path d="M4.3 8 V5.5 A3.7 3.7 0 0 1 11.7 5.5 V8" fill="none" stroke="#cfcfcf" stroke-width="2"/>
 <rect x="2" y="7.5" width="12" height="9" rx="1" fill="#cfcfcf"/>
 <rect x="7.2" y="10" width="1.6" height="4" fill="#4b5559"/>
</svg>
<div class="a pl" style="left:870px;top:727px;width:80px">2.5G WAN</div>
<div class="a pl" style="left:870px;top:788px;width:80px">LAN</div>
<div class="a pl" style="left:939px;top:788px;width:80px">USB3.0</div>
<div class="a" style="left:877px;top:824px;width:13px;height:12px;background:#2bc41f"></div>
<div class="a" style="left:877px;top:847px;width:13px;height:12px;background:#eeb512"></div>
<div class="a" style="left:877px;top:871px;width:13px;height:12px;background:#d8d8d8"></div>
<div class="a lg" style="top:824px">Connected</div>
<div class="a lg" style="top:847px">Notice</div>
<div class="a lg" style="top:871px">Unplugged</div>
</body></html>
